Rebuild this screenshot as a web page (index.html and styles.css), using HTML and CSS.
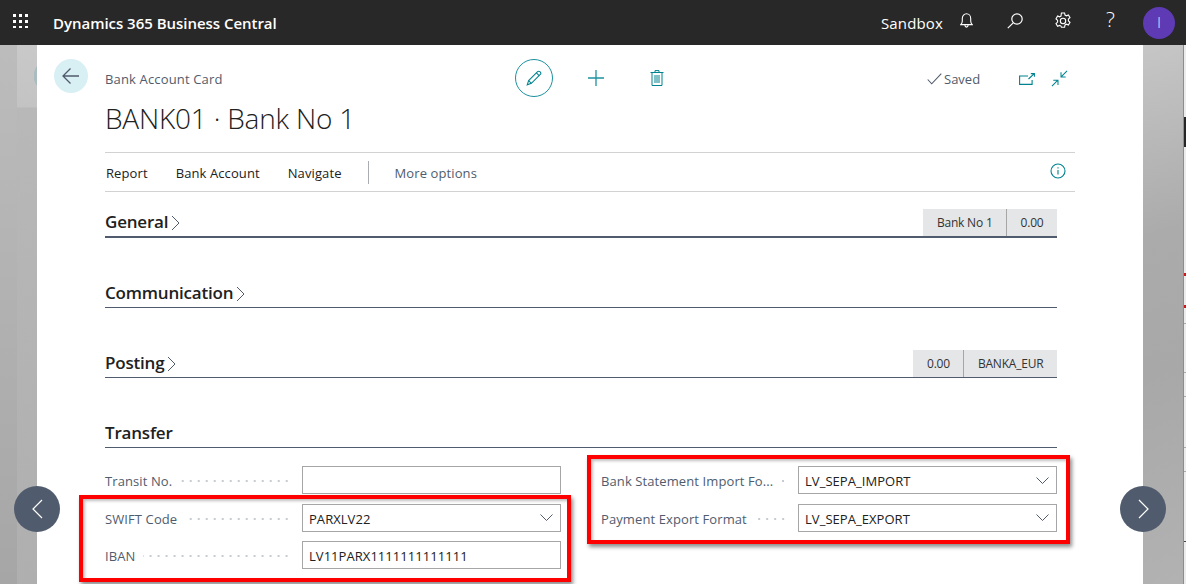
FILE: index.html
```html
<!DOCTYPE html>
<html lang="en">
<head>
<meta charset="utf-8">
<title>Bank Account Card</title>
<link rel="stylesheet" href="styles.css">
</head>
<body>
<div class="app">
  <header class="topbar">
    <svg class="waffle" width="18" height="14" viewBox="0 0 18 14"><g fill="#fff"><rect x="1" y="0" width="3" height="3"/><rect x="7" y="0" width="3" height="3"/><rect x="13" y="0" width="3" height="3"/><rect x="1" y="6" width="3" height="3"/><rect x="7" y="6" width="3" height="3"/><rect x="13" y="6" width="3" height="3"/><rect x="1" y="12" width="3" height="2"/><rect x="7" y="12" width="3" height="2"/><rect x="13" y="12" width="3" height="2"/></g></svg>
    <span class="brand">Dynamics 365 Business Central</span>
    <span class="env">Sandbox</span>
    <svg class="tb-bell" width="13" height="15" viewBox="0 0 13 15" fill="none" stroke="#fff" stroke-width="1.100"><path d="M.8 11.600h11.400c-1-.9-1.500-2-1.500-3.600V5.400C10.700 2.700 8.800.7 6.500.7S2.300 2.700 2.300 5.400V8c0 1.600-.5 2.700-1.500 3.600z"/><path d="M4.800 12.200c.2 1.200.9 1.900 1.700 1.900s1.500-.7 1.700-1.900"/></svg>
    <svg class="tb-search" width="16" height="16" viewBox="0 0 16 16" fill="none" stroke="#fff" stroke-width="1.200"><circle cx="10" cy="6" r="5.200"/><path d="M6.200 9.800.8 15.200"/></svg>
    <svg class="tb-gear" width="18" height="18" viewBox="0 0 18 18" fill="none" stroke="#fff" stroke-width="1.100"><path d="M7.400 1h3.200l.4 2.100 1.400.7 2-.8 1.600 2.700-1.600 1.400v1.800l1.600 1.400-1.600 2.700-2-.8-1.400.7-.4 2.300H7.400L7 14.100l-1.400-.7-2 .8L2 11.500l1.600-1.400V8.300L2 6.900 3.600 4l2 .8L7 4.100z"/><circle cx="9" cy="9" r="2.700"/></svg>
    <span class="tb-help">?</span>
    <span class="avatar">I</span>
  </header>

  <div class="stage">
    <div class="backdrop-left"></div>
    <main class="card">
      <div class="card-head">
        <button class="back" aria-label="Back">
          <svg width="20" height="18" viewBox="0 0 20 18" fill="none" stroke="#505c6d" stroke-width="1.300"><path d="M18 9H2M9.500 1.500 2 9l7.500 7.500"/></svg>
        </button>
        <div class="titles">
          <div class="head-row">
            <span class="caption">Bank Account Card</span>
            <div class="tools">
              <span class="edit-ring">
                <svg width="16" height="16" viewBox="0 0 20 20" fill="none" stroke="#00838f" stroke-width="1.300"><path d="M1.500 18.500l1.800-5.200L14.500 2.100c.8-.8 2-.8 2.800 0l.6.600c.8.800.8 2 0 2.800L6.700 16.700z"/><path d="M3.300 13.300l3.400 3.400M13 3.600l3.400 3.400"/></svg>
              </span>
              <svg class="tool-plus" width="16" height="16" viewBox="0 0 16 16" fill="none" stroke="#1c929e" stroke-width="1.300"><path d="M8 0v16M0 8h16"/></svg>
              <svg class="tool-trash" width="14" height="16" viewBox="0 0 14 16" fill="none" stroke="#00838f" stroke-width="1"><path d="M.5 2.500h13M2 2.500v13h10v-13M5 2.500V.6h4v1.900M5 5v8M7 5v8M9 5v8"/></svg>
            </div>
            <div class="status">
              <svg width="15" height="12" viewBox="0 0 15 12" fill="none" stroke="#505c6d" stroke-width="1.100"><path d="M.7 6.500l4 4.300L14.300.7"/></svg>
              <span>Saved</span>
            </div>
            <div class="winbtns">
              <svg class="win-open" width="16" height="12" viewBox="0 0 16 12" fill="none" stroke="#00838f" stroke-width="1.100"><path d="M9 3H.6v8.400h12.500V7"/><path d="M9.500 6 15 .8M11.800.6h3.600v3.200"/></svg>
              <svg width="17" height="17" viewBox="0 0 18 17" fill="none" stroke="#00838f" stroke-width="1.100"><path d="M17 .5l-6 6M10.600 2v4.800h4.900M1 16.500l6-6M2.400 10.400h5v5"/></svg>
            </div>
          </div>
          <h1 class="page-title">BANK01 · Bank No 1</h1>
        </div>
      </div>

      <nav class="actionbar">
        <a class="act">Report</a>
        <a class="act">Bank Account</a>
        <a class="act">Navigate</a>
        <span class="act-sep"></span>
        <a class="act act-more">More options</a>
        <svg class="info" width="16" height="16" viewBox="0 0 16 16" fill="none" stroke="#00838f" stroke-width="1.100"><circle cx="8" cy="8" r="7"/><path d="M8 7v4.600M8 4.200v1.300"/></svg>
      </nav>

      <section class="fasttab tab-general">
        <h2 class="tab-title">General<svg class="chev" width="9" height="16" viewBox="0 0 9 16" fill="none" stroke="#505c6d"><path d="M1 1l7 7-7 7"/></svg></h2>
        <div class="facts"><span class="fact">Bank No 1</span><span class="fact">0.00</span></div>
      </section>
      <section class="fasttab tab-comm">
        <h2 class="tab-title">Communication<svg class="chev" width="9" height="16" viewBox="0 0 9 16" fill="none" stroke="#505c6d"><path d="M1 1l7 7-7 7"/></svg></h2>
      </section>
      <section class="fasttab tab-post">
        <h2 class="tab-title">Posting<svg class="chev" width="9" height="16" viewBox="0 0 9 16" fill="none" stroke="#505c6d"><path d="M1 1l7 7-7 7"/></svg></h2>
        <div class="facts"><span class="fact">0.00</span><span class="fact">BANKA_EUR</span></div>
      </section>
      <section class="fasttab tab-transfer">
        <h2 class="tab-title">Transfer</h2>
      </section>

      <div class="fields">
        <div class="col">
          <div class="field"><span class="label">Transit No.</span><span class="dots"></span><span class="input"></span></div>
          <div class="field"><span class="label">SWIFT Code</span><span class="dots"></span><span class="input">PARXLV22<svg class="caret" width="13" height="7" viewBox="0 0 13 7" fill="none" stroke="#505c6d"><path d="M.5.500l6 6 6-6"/></svg></span></div>
          <div class="field"><span class="label">IBAN</span><span class="dots"></span><span class="input">LV11PARX1111111111111</span></div>
        </div>
        <div class="col col-right">
          <div class="field"><span class="label">Bank Statement Import Fo...</span><span class="dots"></span><span class="input">LV_SEPA_IMPORT<svg class="caret" width="13" height="7" viewBox="0 0 13 7" fill="none" stroke="#505c6d"><path d="M.5.500l6 6 6-6"/></svg></span></div>
          <div class="field"><span class="label">Payment Export Format</span><span class="dots"></span><span class="input">LV_SEPA_EXPORT<svg class="caret" width="13" height="7" viewBox="0 0 13 7" fill="none" stroke="#505c6d"><path d="M.5.500l6 6 6-6"/></svg></span></div>
        </div>
      </div>
    </main>
    <div class="backdrop-right"><div class="sliver"></div></div>

    <button class="nav nav-prev" aria-label="Previous"><svg width="11" height="20" viewBox="0 0 11 20" fill="none" stroke="#fff" stroke-width="1.200"><path d="M10 1 1 10l9 9"/></svg></button>
    <button class="nav nav-next" aria-label="Next"><svg width="11" height="20" viewBox="0 0 11 20" fill="none" stroke="#fff" stroke-width="1.200"><path d="M1 1l9 9-9 9"/></svg></button>
    <div class="mark mark-left"></div>
    <div class="mark mark-right"></div>
  </div>
</div>
</body>
</html>
```
FILE: styles.css
```css
* { box-sizing: border-box; }
html, body { margin: 0; height: 100%; overflow: hidden; }
body { font-family: "Open Sans", "Noto Sans", sans-serif; color: #212121; background: #fff; }
.app { width: 1186px; height: 584px; display: flex; flex-direction: column; overflow: hidden; }

.topbar { height: 45px; flex: none; background: #282828; color: #fff; display: flex; align-items: center; position: relative; }
.waffle { margin: -4px 23px 0 12px; flex: none; }
.brand { font-size: 15px; font-weight: 600; letter-spacing: -.03px; white-space: nowrap; }
.env { margin-left: auto; font-size: 15px; letter-spacing: .15px; }
.tb-bell { margin: -4px 0 0 17px; flex: none; }
.tb-search { margin: -3px 0 0 34px; flex: none; }
.tb-gear { margin: -3px -1px 0 31px; flex: none; }
.tb-help { margin: -6px 0 0 35px; font-size: 21px; font-weight: 300; width: 10px; line-height: 1; }
.avatar { margin-left: 27px; margin-right: 11px; width: 32px; height: 32px; border-radius: 50%; background: #5f3ab5; display: flex; align-items: center; justify-content: center; font-size: 14px; font-weight: 300; flex: none; }

.stage { flex: 1; display: flex; position: relative; min-height: 0; }
.backdrop-left { width: 37px; flex: none; background:
  radial-gradient(circle at 51px 31px, #a9bcc0 0 17px, transparent 17.500px),
  linear-gradient(180deg, #c9c9c9 0, #c3c3c3 62px, #b8b8b8 63px, #afafaf 100%) 17px 0 / 20px 100% no-repeat,
  linear-gradient(180deg, #bcbcbc, #a6a6a6 100%); }
.backdrop-right { width: 43px; flex: none; display: flex; justify-content: flex-end; background: linear-gradient(165deg, #c6c6c6 0, #ababab 35%, #a8a8a8 60%, #b2b2b2 100%); }
.sliver { width: 3px; border-left: 1px solid #8d8d8d; background:
  linear-gradient(#262626, #262626) 0 72px / 100% 30px no-repeat,
  linear-gradient(#d01818, #d01818) 0 228px / 100% 3px no-repeat,
  linear-gradient(#d01818, #d01818) 0 260px / 100% 3px no-repeat,
  linear-gradient(#aaa, #aaa) 0 278px / 100% 1px no-repeat,
  linear-gradient(#aaa, #aaa) 0 327px / 100% 1px no-repeat,
  linear-gradient(#aaa, #aaa) 0 351px / 100% 1px no-repeat,
  linear-gradient(#aaa, #aaa) 0 402px / 100% 1px no-repeat,
  linear-gradient(#aaa, #aaa) 0 426px / 100% 1px no-repeat,
  linear-gradient(#444, #444) 0 496px / 100% 1px no-repeat,
  #ececec; }

.card { flex: 1; background: #fff; padding: 14px 0 0 17px; min-width: 0; }
.card-head { display: flex; gap: 17px; height: 93px; }
.back { width: 34px; height: 34px; border-radius: 50%; border: 0; padding: 0; background: #d8eff3; display: flex; align-items: center; justify-content: center; flex: none; }
.titles { flex: 1; min-width: 0; }
.head-row { display: flex; align-items: center; height: 38px; }
.caption { font-size: 13px; color: #505c6d; width: 410px; white-space: nowrap; letter-spacing: .15px; padding-top: 2px; }
.tools { display: flex; align-items: center; width: 412px; }
.edit-ring { width: 38px; height: 38px; border-radius: 50%; border: 1px solid #1c929e; display: flex; align-items: center; justify-content: center; }
.tool-plus { margin-left: 35px; }
.tool-trash { margin-left: 46px; }
.status { display: flex; align-items: center; gap: 2px; font-size: 13px; color: #505c6d; width: 92px; letter-spacing: 0; padding-top: 2px; }
.winbtns { display: flex; align-items: center; gap: 16px; }
.win-open { margin-top: 1px; }
.page-title { margin: 3px 0 0; font-size: 28px; font-weight: 300; line-height: 36px; color: #212121; letter-spacing: -.2px; white-space: nowrap; }

.actionbar { margin-left: 51px; margin-right: 68px; height: 40px; border-top: 1px solid #d2d2d2; border-bottom: 1px solid #d2d2d2; display: flex; align-items: center; font-size: 13px; letter-spacing: .1px; }
.act { padding: 2px 0 0 1px; margin-right: 27px; white-space: nowrap; }
.act-sep { width: 1px; height: 23px; background: #a9adb3; margin-right: 25px; margin-left: -1px; }
.act-more { color: #505c6d; }
.info { margin-left: auto; margin-right: 9px; margin-top: -3px; }

.fasttab { margin-left: 51px; margin-right: 86px; height: 70px; border-bottom: 1px solid #505c6d; display: flex; align-items: flex-end; justify-content: space-between; }
.tab-general { height: 46px; border-bottom-width: 2px; }
.tab-title { margin: 0 0 2px; font-size: 17px; font-weight: 600; line-height: 24px; display: flex; align-items: center; gap: 3px; letter-spacing: -.2px; color: #212121; }
.chev { margin-top: 2px; }
.facts { display: flex; height: 27px; background: #e4e6e8; }
.fact { font-size: 12px; letter-spacing: -.2px; color: #333; display: flex; align-items: center; padding: 0 13.500px; border-left: 1px solid #a6a6a6; white-space: nowrap; }
.fact:first-child { border-left: 0; }

.fields { margin: 18px 86px 0 51px; display: flex; justify-content: space-between; }
.col { width: 456px; display: flex; flex-direction: column; gap: 9.500px; }
.field { display: flex; align-items: center; height: 28px; }
.label { font-size: 13px; color: #505c6d; white-space: nowrap; letter-spacing: .1px; padding-top: 2px; }
.dots { flex: 1; height: 2px; margin: 2px 11px 0 8px; min-width: 5px; background: radial-gradient(circle, #c8ccd0 0 1px, transparent 1px) right center / 8px 2px repeat-x; }
.input { width: 259px; height: 28px; flex: none; border: 1px solid #a6a6a6; display: flex; align-items: center; justify-content: space-between; padding: 2px 7px 0 6px; font-size: 13px; letter-spacing: .05px; color: #212121; background: #fff; }
.caret { margin-top: -2px; }

.nav { position: absolute; top: 441px; width: 46px; height: 46px; border: 0; padding: 0; border-radius: 50%; background: #505c6d; display: flex; align-items: center; justify-content: center; }
.nav-prev { left: 14px; }
.nav-next { left: 1120px; }

.mark { position: absolute; border: 4px solid #f00; box-shadow: 2px 3px 4px rgba(0,0,0,.45), inset 2px 2px 3px rgba(0,0,0,.25); }
.mark-left { left: 79px; top: 450px; width: 492px; height: 87px; }
.mark-right { left: 587px; top: 410px; width: 483px; height: 89px; }
```
